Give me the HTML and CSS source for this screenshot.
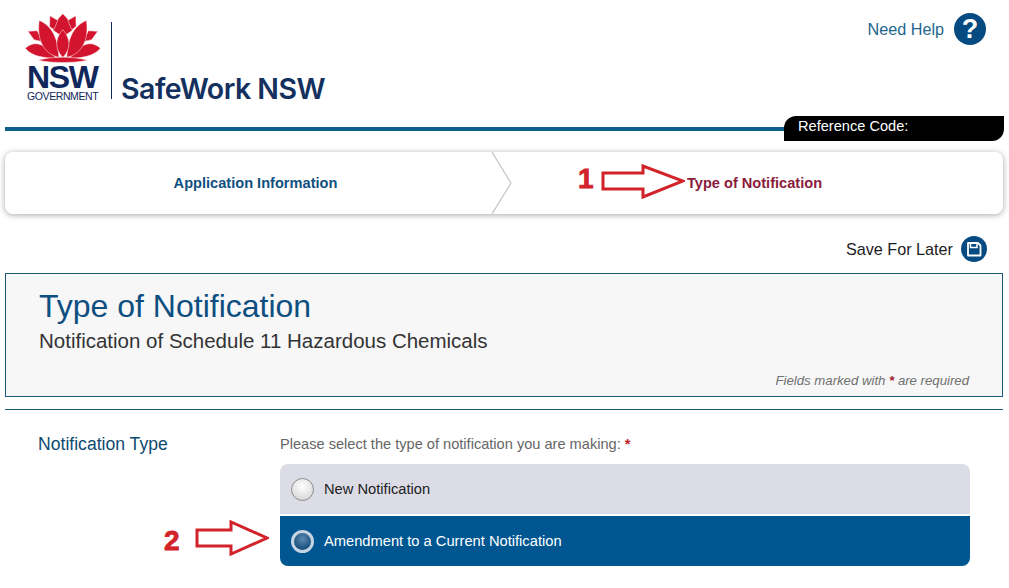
FILE: index.html
```html
<!DOCTYPE html>
<html lang="en">
<head>
  <meta charset="UTF-8" />
  <title>Type of Notification</title>
  <link rel="stylesheet" href="styles.css">
</head>
<body>
  <div class="header">
    <div class="logo">
      <div class="logo-mark">
        <svg class="waratah" viewBox="70 40 235 150" width="78" height="50">
          <defs>
            <g id="half-flower">
              <path d="M148 48 L172 62 L160 90 L147 80 Z"/>
              <path d="M82 95 L110 93 L126 126 L100 120 Z"/>
              <path d="M74 146 C100 122 132 128 167 177 C130 174 95 172 74 146 Z"/>
              <path d="M116 62 C152 78 172 110 175 173 C138 166 106 130 116 62 Z"/>
            </g>
          </defs>
          <g class="petals">
            <path d="M187 42 C201 56 214 72 216 92 L187 112 L158 92 C160 72 173 56 187 42 Z"/>
            <use href="#half-flower"/>
            <use href="#half-flower" transform="translate(374 0) scale(-1 1)"/>
            <path d="M187 90 C210 115 213 146 187 174 C161 146 164 115 187 90 Z"/>
            <path d="M114 182 C150 170 224 170 260 182 C224 191 150 191 114 182 Z"/>
          </g>
        </svg>
        <div class="logo-nsw">NSW</div>
        <div class="logo-gov">GOVERNMENT</div>
      </div>
      <div class="logo-divider"></div>
      <div class="logo-name">SafeWork NSW</div>
    </div>
    <div class="help">
      <span class="help-text">Need Help</span>
      <span class="help-icon">?</span>
    </div>
    <div class="ref-code">Reference Code:</div>
  </div>

  <div class="stepper">
    <div class="step step-done">
      Application Information
      <svg class="chevron" viewBox="0 0 20 62" width="20" height="62">
        <path d="M0 0 L19 31 L0 62" fill="none" stroke="#c4c4c4" stroke-width="1.2"/>
      </svg>
    </div>
    <div class="step step-active">
      Type of Notification
    </div>
    <span class="note-num note-one">1</span>
    <svg class="note-arrow arrow-one" viewBox="0 0 84 35" width="84" height="35">
      <path d="M2 9 H42 V2 L82 17 L42 33 V25 H2 Z"/>
    </svg>
  </div>

  <div class="save-row">
    <span class="save-text">Save For Later</span>
    <span class="save-icon">
      <svg viewBox="0 0 26 26" width="26" height="26">
        <path d="M7 7 H17 L19.5 9.5 V19.5 H7 Z" fill="none" stroke="#fff" stroke-width="1.8" stroke-linejoin="round"/>
        <path d="M9.5 7 V11.5 H16 V7" fill="none" stroke="#fff" stroke-width="1.5"/>
      </svg>
    </span>
  </div>

  <div class="panel">
    <h1>Type of Notification</h1>
    <h2>Notification of Schedule 11 Hazardous Chemicals</h2>
    <p class="required-note">Fields marked with <span class="star">*</span> are required</p>
  </div>

  <hr class="divider">

  <div class="form-row">
    <div class="form-label">Notification Type</div>
    <div class="form-field">
      <div class="question">Please select the type of notification you are making: <span class="star">*</span></div>
      <div class="option">
        <span class="radio"></span>
        New Notification
      </div>
      <div class="option option-selected">
        <span class="radio"></span>
        Amendment to a Current Notification
        <span class="note-num note-two">2</span>
        <svg class="note-arrow arrow-two" viewBox="0 0 74 36" width="74" height="36">
          <path d="M2 10 H36 V2 L72 18 L36 34 V26 H2 Z"/>
        </svg>
      </div>
    </div>
  </div>
</body>
</html>
```

FILE: styles.css
```css
* {
  box-sizing: border-box;
}

body {
  margin: 0;
  padding: 0 6px 0 5px;
  height: 588px;
  overflow: hidden;
  background: #fff;
  font-family: "Liberation Sans", Arial, sans-serif;
}

.header {
  position: relative;
  display: flex;
  justify-content: space-between;
  height: 131px;
  padding: 13px 17px 0 18px;
  border-bottom: 4px solid #0f5f8c;
}

.logo {
  display: flex;
  align-items: flex-start;
}

.logo-mark {
  width: 82px;
  color: #10275c;
  text-align: center;
}

.waratah {
  display: block;
  margin: 0 0 0 1px;
}

.petals {
  fill: #d2142e;
  stroke: #fbe6e6;
  stroke-width: 1.6;
}

.logo-nsw {
  padding-left: 4px;
  font-size: 32px;
  line-height: 28px;
  font-weight: bold;
  letter-spacing: -1.4px;
  text-align: left;
}

.logo-gov {
  padding-left: 4px;
  font-size: 10.5px;
  line-height: 10px;
  letter-spacing: -0.4px;
  text-align: left;
}

.logo-divider {
  width: 1px;
  height: 77px;
  margin: 9px 9px 0 6px;
  background: #10275c;
}

.logo-name {
  margin-top: 58px;
  font-family: Inter, sans-serif;
  font-size: 28.5px;
  line-height: 36px;
  font-weight: 600;
  letter-spacing: -0.5px;
  color: #14305f;
}

.help {
  display: flex;
  align-items: center;
  gap: 10px;
  height: 32px;
}

.help-text {
  font-size: 16.2px;
  color: #24668e;
}

.help-icon {
  width: 32px;
  height: 32px;
  border-radius: 50%;
  background: #054a80;
  color: #fff;
  font-size: 27px;
  line-height: 32px;
  font-weight: bold;
  text-align: center;
}

.ref-code {
  position: absolute;
  right: -1px;
  bottom: -14px;
  width: 220px;
  height: 25px;
  padding: 2px 0 0 14px;
  background: #000;
  border-radius: 12px 0 12px 0;
  color: #fff;
  font-size: 14.6px;
  line-height: 16px;
}

.stepper {
  position: relative;
  display: flex;
  height: 62px;
  margin-top: 21px;
  background: #fff;
  border-radius: 8px;
  box-shadow: 0 1px 6px rgba(0, 0, 0, 0.35);
}

.step {
  position: relative;
  flex: 1;
  padding-left: 2px;
  font-size: 14.6px;
  line-height: 62px;
  font-weight: bold;
  text-align: center;
}

.step-done {
  color: #0f5080;
}

.step-active {
  color: #8a1c3c;
}

.chevron {
  position: absolute;
  top: 0;
  right: -8px;
}

.note-num {
  position: absolute;
  color: #d2232a;
  font-size: 28px;
  line-height: 28px;
  font-weight: bold;
  -webkit-text-stroke: 0.8px #d2232a;
}

.note-arrow {
  position: absolute;
  fill: none;
  stroke: #d2232a;
  stroke-width: 3;
}

.note-one {
  left: 573px;
  top: 13px;
}

.arrow-one {
  left: 596px;
  top: 12px;
}

.save-row {
  display: flex;
  justify-content: flex-end;
  align-items: center;
  gap: 8px;
  height: 26px;
  margin: 22px 0 11px;
  padding-right: 16px;
}

.save-text {
  padding-top: 1px;
  font-size: 16.2px;
  color: #1c1c1c;
}

.save-icon {
  width: 26px;
  height: 26px;
  border-radius: 50%;
  background: #054a80;
}

.save-icon svg {
  display: block;
}

.panel {
  height: 124px;
  padding: 14px 33px 0 33px;
  background: #f7f7f7;
  border: 1px solid #1c5a7a;
}

.panel h1 {
  margin: 0;
  font-size: 32px;
  line-height: 36px;
  font-weight: normal;
  color: #0d4f80;
}

.panel h2 {
  margin: 4px 0 0;
  font-size: 20.5px;
  line-height: 26px;
  font-weight: normal;
  color: #333;
}

.required-note {
  margin: 19px 0 0;
  font-size: 13.2px;
  line-height: 16px;
  font-style: italic;
  color: #707070;
  text-align: right;
}

.star {
  color: #a01c30;
  font-weight: bold;
}

.divider {
  height: 1px;
  margin: 12px 0 0;
  border: 0;
  background: #1c5a7a;
}

.form-row {
  display: flex;
  padding-top: 25px;
}

.form-label {
  width: 275px;
  padding-left: 33px;
  font-size: 17.6px;
  line-height: 19px;
  color: #0d4a70;
}

.form-field {
  width: 690px;
}

.question {
  height: 29px;
  font-size: 14.6px;
  line-height: 19px;
  color: #666;
}

.question .star {
  color: #c0202a;
}

.option {
  position: relative;
  display: flex;
  align-items: center;
  gap: 10px;
  height: 50px;
  padding-left: 11px;
  background: #dcdce6;
  border-radius: 8px 8px 0 0;
  font-size: 14.7px;
  color: #222;
}

.option-selected {
  margin-top: 2px;
  background: #005691;
  border-radius: 0 0 8px 8px;
  color: #fff;
}

.radio {
  width: 23px;
  height: 23px;
  border-radius: 50%;
  border: 1px solid #8c8c8c;
  background: radial-gradient(circle at 50% 35%, #fff, #ddd 70%, #bbb);
}

.option-selected .radio {
  border: 3px solid #c4d4e2;
  background: radial-gradient(circle at 50% 35%, #5d8ab0, #174d7c 75%);
}

.note-two {
  left: -116px;
  top: 11px;
}

.arrow-two {
  left: -85px;
  top: 4px;
}
```
